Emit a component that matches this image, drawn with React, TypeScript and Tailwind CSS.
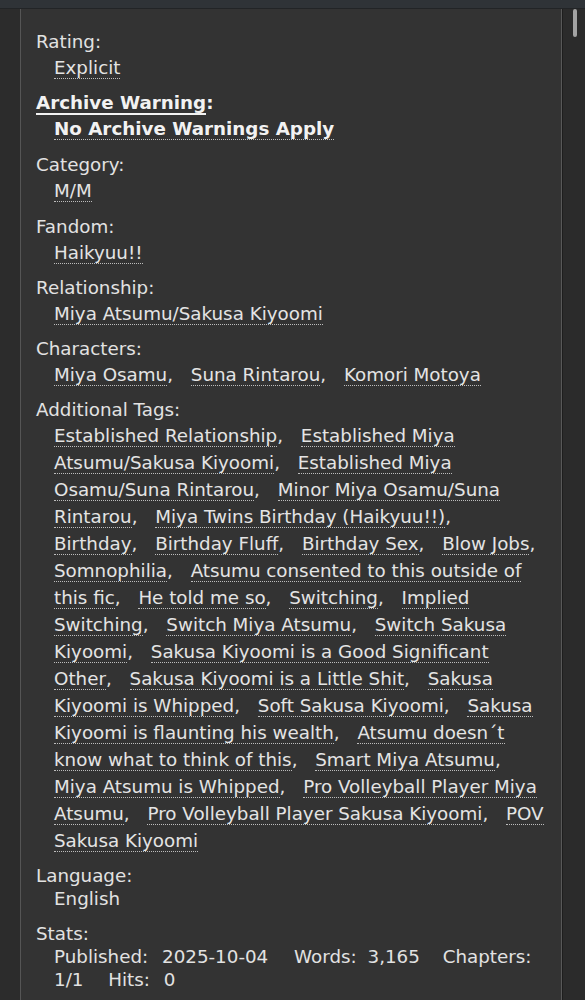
import React from "react";

const tags = [
  "Established Relationship",
  "Established Miya Atsumu/Sakusa Kiyoomi",
  "Established Miya Osamu/Suna Rintarou",
  "Minor Miya Osamu/Suna Rintarou",
  "Miya Twins Birthday (Haikyuu!!)",
  "Birthday",
  "Birthday Fluff",
  "Birthday Sex",
  "Blow Jobs",
  "Somnophilia",
  "Atsumu consented to this outside of this fic",
  "He told me so",
  "Switching",
  "Implied Switching",
  "Switch Miya Atsumu",
  "Switch Sakusa Kiyoomi",
  "Sakusa Kiyoomi is a Good Significant Other",
  "Sakusa Kiyoomi is a Little Shit",
  "Sakusa Kiyoomi is Whipped",
  "Soft Sakusa Kiyoomi",
  "Sakusa Kiyoomi is flaunting his wealth",
  "Atsumu doesn\u00B4t know what to think of this",
  "Smart Miya Atsumu",
  "Miya Atsumu is Whipped",
  "Pro Volleyball Player Miya Atsumu",
  "Pro Volleyball Player Sakusa Kiyoomi",
  "POV Sakusa Kiyoomi",
];

function TagList({ items, bold }: { items: string[]; bold?: boolean }) {
  return (
    <div className="pl-[18px] leading-[27px]">
      {items.map((t, i) => (
        <React.Fragment key={i}>
          <a
            className={
              "border-b border-dotted border-[#bdbdbd] " +
              (bold ? "font-bold text-[#f2f2f2]" : "text-[#e4e4e4]")
            }
          >
            {t}
          </a>
          {i < items.length - 1 ? (
            <span className="[word-spacing:12px]">, </span>
          ) : null}
        </React.Fragment>
      ))}
    </div>
  );
}

function Group({
  label,
  children,
  boldLabel,
  className,
  labelLh,
}: {
  label: string;
  children: React.ReactNode;
  boldLabel?: boolean;
  className?: string;
  labelLh?: string;
}) {
  return (
    <div className={className ?? "mb-[9px]"}>
      <div className={labelLh ?? "leading-[25px]"}>
        {boldLabel ? (
          <span className="font-bold text-[#f2f2f2]">
            <span className="border-b-2 border-solid border-[#f2f2f2]">{label}</span>:
          </span>
        ) : (
          <span>{label}:</span>
        )}
      </div>
      {children}
    </div>
  );
}

export default function App() {
  return (
    <div
      className="w-[585px] h-[1000px] overflow-hidden bg-[#2d2d2d] flex flex-col text-[18.3px] text-[#e2e2e2]"
      style={{ fontFamily: '"DejaVu Sans", Verdana, sans-serif' }}
    >
      <div className="h-[9px] shrink-0 bg-[#2f3337] border-b border-[#222426]" />
      <div className="flex flex-1 min-h-0">
        <div className="w-[21px] shrink-0 bg-[#2c2c2c] border-r border-[#555555]" />
        <div className="w-[541px] shrink-0 bg-[#333333] border-r border-[#585858] pl-[15px] pr-[10px] pt-[20px]">
          <Group label="Rating">
            <TagList items={["Explicit"]} />
          </Group>
          <Group label="Archive Warning" boldLabel className="mb-[10px]">
            <TagList items={["No Archive Warnings Apply"]} bold />
          </Group>
          <Group label="Category" className="mb-[10px]">
            <TagList items={["M/M"]} />
          </Group>
          <Group label="Fandom">
            <TagList items={["Haikyuu!!"]} />
          </Group>
          <Group label="Relationship">
            <TagList items={["Miya Atsumu/Sakusa Kiyoomi"]} />
          </Group>
          <Group label="Characters">
            <TagList items={["Miya Osamu", "Suna Rintarou", "Komori Motoya"]} />
          </Group>
          <Group label="Additional Tags" className="mb-[10px]">
            <TagList items={tags} />
          </Group>
          <Group label="Language" className="mb-[12px]" labelLh="leading-[23px]">
            <div className="pl-[18px] leading-[23px]">English</div>
          </Group>
          <Group label="Stats" labelLh="leading-[23px]">
            <div className="pl-[18px] leading-[23px]">
              <span className="mr-[8px]">Published:</span>{" "}
              <span className="mr-[20px]">2025-10-04</span>{" "}
              <span className="mr-[5px]">Words:</span>{" "}
              <span className="mr-[17px]">3,165</span>{" "}
              <span className="mr-[6px]">Chapters:</span>{" "}
              <span className="mr-[19px]">1/1</span>{" "}
              <span className="mr-[8px]">Hits:</span>{" "}
              <span>0</span>
            </div>
          </Group>
        </div>
        <div className="w-[1px] shrink-0 bg-[#1e1e1e]" />
        <div className="flex-1 bg-[#2b2b2b] relative">
          <div className="absolute left-[10px] top-[0px] w-[4px] h-[28px] rounded-[2px] bg-[#a3a3a3]" />
        </div>
      </div>
    </div>
  );
}
